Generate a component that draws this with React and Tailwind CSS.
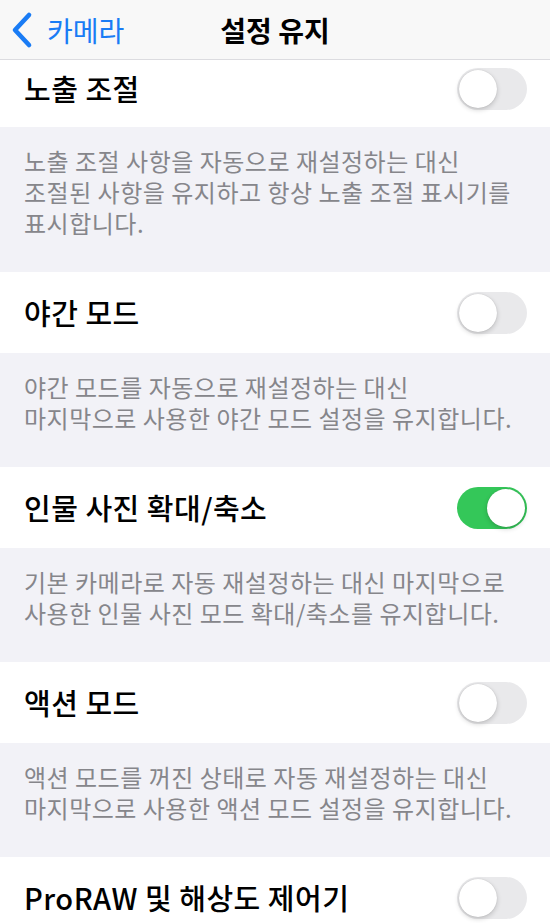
const sections = [
  {
    title: "노출 조절",
    on: false,
    lines: [
      "노출 조절 사항을 자동으로 재설정하는 대신",
      "조절된 사항을 유지하고 항상 노출 조절 표시기를",
      "표시합니다.",
    ],
  },
  {
    title: "야간 모드",
    on: false,
    lines: [
      "야간 모드를 자동으로 재설정하는 대신",
      "마지막으로 사용한 야간 모드 설정을 유지합니다.",
    ],
  },
  {
    title: "인물 사진 확대/축소",
    on: true,
    lines: [
      "기본 카메라로 자동 재설정하는 대신 마지막으로",
      "사용한 인물 사진 모드 확대/축소를 유지합니다.",
    ],
  },
  {
    title: "액션 모드",
    on: false,
    lines: [
      "액션 모드를 꺼진 상태로 자동 재설정하는 대신",
      "마지막으로 사용한 액션 모드 설정을 유지합니다.",
    ],
  },
  {
    title: "ProRAW 및 해상도 제어기",
    on: false,
    lines: [],
  },
];

function Toggle({ on }) {
  return (
    <div
      className={`flex h-[42px] w-[70px] shrink-0 items-center rounded-full p-[2px] ${
        on ? "justify-end bg-[#34c759]" : "justify-start bg-[#e9e9eb]"
      }`}
    >
      <div className="h-[38px] w-[38px] rounded-full bg-white shadow-[0_2px_5px_rgba(0,0,0,0.18),0_0_1px_rgba(0,0,0,0.2)]" />
    </div>
  );
}

function BackChevron() {
  return (
    <svg width="24" height="38" viewBox="0 0 24 38" fill="none">
      <path
        d="M19 4 L5 19 L19 34"
        stroke="currentColor"
        strokeWidth="4.6"
        strokeLinecap="round"
        strokeLinejoin="round"
      />
    </svg>
  );
}

export default function App() {
  return (
    <div
      className="h-[923px] w-[550px] overflow-hidden bg-[#f2f2f7]"
      style={{ fontFamily: '"Noto Sans CJK KR", "Noto Sans", sans-serif' }}
    >
      {/* Nav bar */}
      <div className="relative flex h-[60px] items-center border-b border-[#dcdce0] bg-[#f8f8f8]">
        <div className="relative z-10 flex items-center pl-[10px] text-[#1a7cf5]">
          <BackChevron />
          <span className="ml-[13px] text-[28px] leading-none">카메라</span>
        </div>
        <div className="absolute left-0 right-0 text-center text-[28px] font-bold leading-none text-black">
          설정 유지
        </div>
      </div>

      {sections.map((s, i) => (
        <div key={s.title}>
          <div
            className={`flex items-center justify-between bg-white pl-[24px] pr-[23px] ${
              i === 0 ? "h-[67px] pb-[10px]" : "h-[81px]"
            }`}
          >
            <span className="text-[29px] font-medium leading-none tracking-[0.5px] text-black">
              {s.title}
            </span>
            <Toggle on={s.on} />
          </div>
          {s.lines.length > 0 && (
            <div className="px-[24px] pb-[34px] pt-[18px] text-[24px] leading-[31px] tracking-[0.5px] text-[#86868b]">
              {s.lines.map((l) => (
                <div key={l} className="whitespace-nowrap">
                  {l}
                </div>
              ))}
            </div>
          )}
        </div>
      ))}
    </div>
  );
}
